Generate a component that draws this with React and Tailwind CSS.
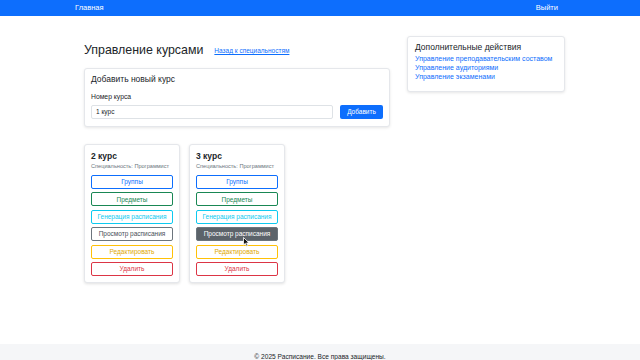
import React from "react";

const courses = [
  { id: 2, title: "2 курс", hover: false },
  { id: 3, title: "3 курс", hover: true },
];

const CourseCard = ({ course }) => {
  return (
    <div className="relative w-[96px] rounded-[3px] border border-[#e5e7eb] bg-white px-[6px] pt-[6px] pb-[6px] shadow-[0_1px_3px_rgba(0,0,0,0.12)]">
      <div className="text-[8.5px] font-bold leading-[10px] text-[#212529]">{course.title}</div>
      <div className="mt-[1px] whitespace-nowrap text-[5.6px] leading-[8px] text-[#6c757d]">Специальность: Программист</div>
      <div className="mt-[5px] flex flex-col gap-[3.4px]">
        <button className="h-[14px] rounded-[2px] border border-[#0d6efd] text-[6.5px] text-[#0d6efd]">Группы</button>
        <button className="h-[14px] rounded-[2px] border border-[#198754] text-[6.5px] text-[#198754]">Предметы</button>
        <button className="h-[14px] rounded-[2px] border border-[#0dcaf0] text-[6.5px] text-[#0dcaf0]">Генерация расписания</button>
        {course.hover ? (
          <button className="relative h-[14px] rounded-[2px] border border-[#6c757d] bg-[#5c636a] text-[6.5px] text-white">
            Просмотр расписания
            {/* курсор мыши */}
            <svg className="absolute left-[46px] top-[9px]" width="7" height="10" viewBox="0 0 7 10">
              <path d="M0.5 0.5 L0.5 8 L2.3 6.3 L3.6 9.3 L4.8 8.8 L3.6 5.9 L6 5.9 Z" fill="#111" stroke="#fff" strokeWidth="0.8" />
            </svg>
          </button>
        ) : (
          <button className="h-[14px] rounded-[2px] border border-[#6c757d] text-[6.5px] text-[#495057]">Просмотр расписания</button>
        )}
        <button className="h-[14px] rounded-[2px] border border-[#ffc107] text-[6.5px] text-[#e0a800]">Редактировать</button>
        <button className="h-[14px] rounded-[2px] border border-[#dc3545] text-[6.5px] text-[#dc3545]">Удалить</button>
      </div>
    </div>
  );
};

export default function App() {
  return (
    <div className="flex min-h-[360px] flex-col bg-white font-['Liberation_Sans',_Arial,_sans-serif] text-[#212529]">
      <nav className="h-[16px] bg-[#0d6efd]">
        <div className="mx-auto flex h-full w-[490px] items-center justify-between pr-[7px] text-[7.5px] text-white">
          <span>Главная</span>
          <span>Выйти</span>
        </div>
      </nav>

      <main className="mx-auto flex w-[490px] flex-1 gap-[17px] pt-[20px] pl-[9px]">
        <div className="w-[306px]">
          <div className="mt-[6px] flex items-center gap-[11px]">
            <h2 className="text-[12.4px] leading-[17px] text-[#212529]">Управление курсами</h2>
            <a href="#" className="pt-[1px] text-[6.5px] text-[#0d6efd] underline">Назад к специальностям</a>
          </div>

          <div className="mt-[9px] rounded-[3px] border border-[#e5e7eb] bg-white px-[6px] pt-[5px] pb-[7px] shadow-[0_1px_3px_rgba(0,0,0,0.1)]">
            <div className="text-[8.5px] leading-[11px]">Добавить новый курс</div>
            <div className="mt-[8px] text-[6.8px] leading-[8px]">Номер курса</div>
            <div className="mt-[4px] flex gap-[7px]">
              <div className="flex h-[14px] flex-1 items-center rounded-[2px] border border-[#dee2e6] px-[4px] text-[6.5px]">1 курс</div>
              <button className="h-[14px] w-[43px] rounded-[2px] bg-[#0d6efd] text-[6.5px] text-white">Добавить</button>
            </div>
          </div>

          <div className="mt-[17px] flex gap-[9px]">
            {courses.map((c) => (
              <CourseCard key={c.id} course={c} />
            ))}
          </div>
        </div>

        <div className="h-[56px] w-[158px] rounded-[3px] border border-[#e5e7eb] bg-white px-[7px] pt-[5px] shadow-[0_1px_3px_rgba(0,0,0,0.1)]">
          <div className="text-[8.5px] leading-[11px]">Дополнительные действия</div>
          <div className="mt-[1px] flex flex-col text-[7px] leading-[9px] text-[#0d6efd]">
            <a href="#">Управление преподавательским составом</a>
            <a href="#">Управление аудиториями</a>
            <a href="#">Управление экзаменами</a>
          </div>
        </div>
      </main>

      <footer className="h-[16px] bg-[#f5f6f8] pt-[8px] text-center text-[6.6px] leading-[9px] text-[#212529]">
        © 2025 Расписание. Все права защищены.
      </footer>
    </div>
  );
}
